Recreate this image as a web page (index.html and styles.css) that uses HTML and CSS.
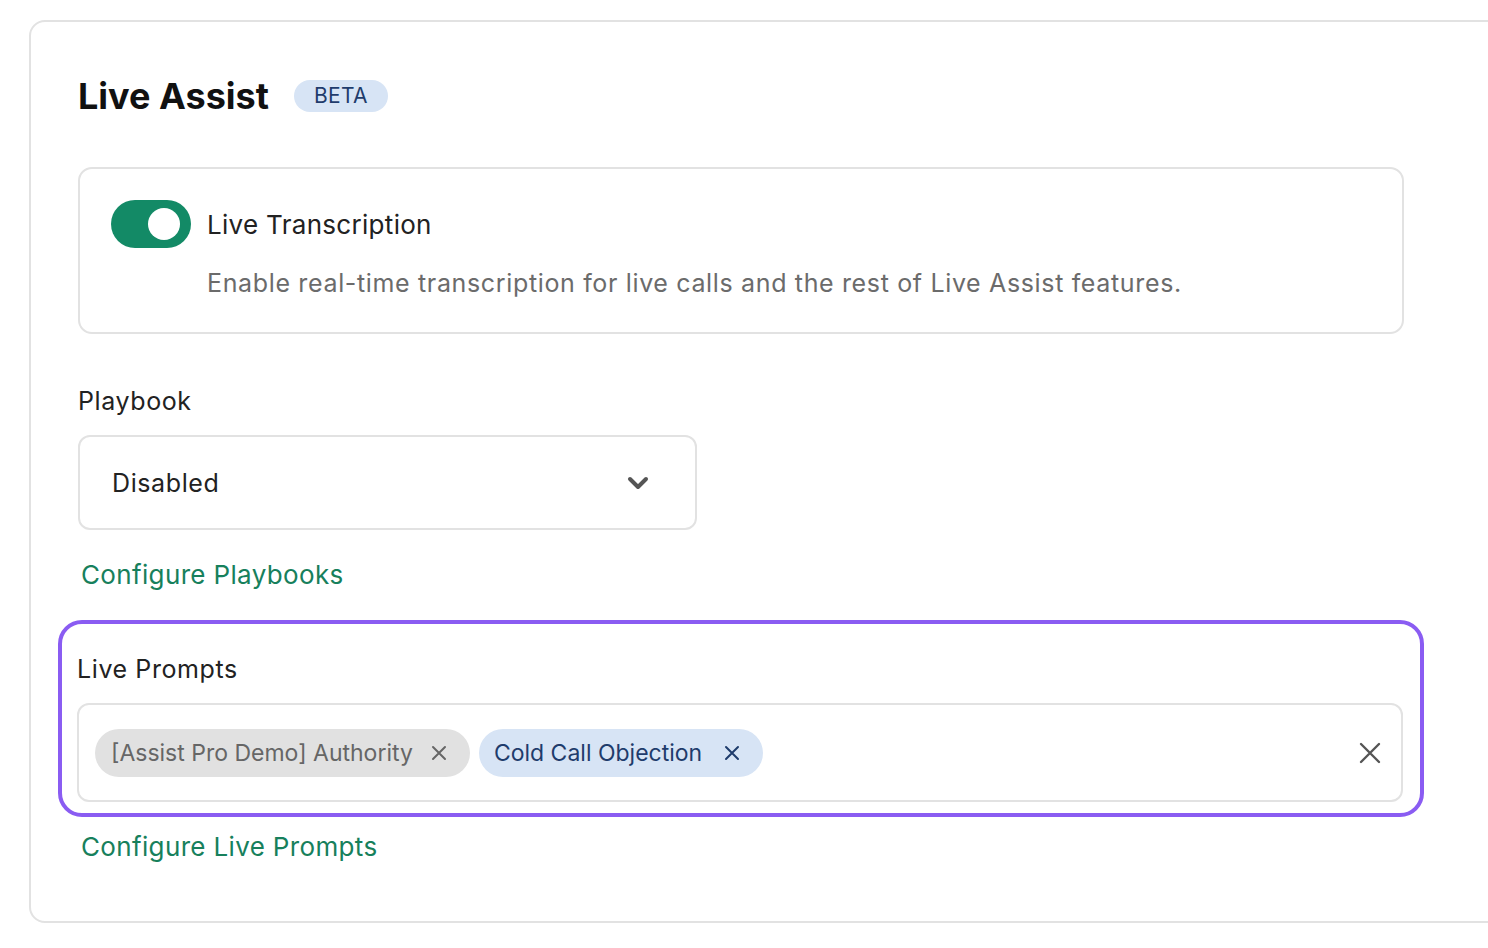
FILE: index.html
```html
<!DOCTYPE html>
<html>
<head>
<meta charset="utf-8">
<link rel="stylesheet" href="styles.css">
</head>
<body>
<div class="card">
  <div class="header">
    <h1 class="title">Live Assist</h1>
    <span class="badge">BETA</span>
  </div>

  <div class="toggle-box">
    <div class="toggle-row">
      <span class="switch"><span class="knob"></span></span>
      <span class="toggle-label">Live Transcription</span>
    </div>
    <p class="toggle-desc">Enable real-time transcription for live calls and the rest of Live Assist features.</p>
  </div>

  <div class="field">
    <div class="label">Playbook</div>
    <div class="select">
      <span class="select-value">Disabled</span>
      <svg class="chev" width="24" height="16" viewBox="0 0 24 16"><path d="M4 4 L12 12 L20 4" fill="none" stroke="#555" stroke-width="4" stroke-linecap="round" stroke-linejoin="round"/></svg>
    </div>
    <a class="link">Configure Playbooks</a>
  </div>

  <div class="highlight">
    <div class="label">Live Prompts</div>
    <div class="multi">
      <div class="chips">
        <span class="chip chip-gray">[Assist Pro Demo] Authority
          <svg class="chip-x" width="16" height="16" viewBox="0 0 16 16"><path d="M2 2 L14 14 M14 2 L2 14" stroke="currentColor" stroke-width="2" stroke-linecap="round"/></svg>
        </span>
        <span class="chip chip-blue">Cold Call Objection
          <svg class="chip-x" width="16" height="16" viewBox="0 0 16 16"><path d="M2 2 L14 14 M14 2 L2 14" stroke="currentColor" stroke-width="2" stroke-linecap="round"/></svg>
        </span>
      </div>
      <svg class="clear" width="22" height="22" viewBox="0 0 22 22"><path d="M2 2 L20 20 M20 2 L2 20" stroke="#555" stroke-width="2.4" stroke-linecap="round"/></svg>
    </div>
  </div>
  <a class="link link2">Configure Live Prompts</a>
</div>
</body>
</html>
```

FILE: styles.css
```css
html, body {
  margin: 0;
  padding: 0;
  background: #fff;
  overflow: hidden;
}
body {
  font-family: "Inter", "Noto Sans", sans-serif;
  color: #222;
  padding: 20px 0 0 29px;
}
.card {
  width: 1500px;
  height: 903px;
  box-sizing: border-box;
  border: 2px solid #e2e2e2;
  border-radius: 16px;
  padding: 50px 0 0 47px;
}
.header {
  display: flex;
  align-items: center;
  gap: 25px;
  height: 48px;
}
.title {
  margin: 0;
  font-size: 36px;
  font-weight: 700;
  color: #111;
  letter-spacing: 0;
}
.badge {
  background: #d7e4f5;
  color: #1f3c6c;
  font-size: 21px;
  padding: 3px 20px;
  border-radius: 16px;
  line-height: 26px;
  letter-spacing: 0.3px;
}
.toggle-box {
  margin-top: 47px;
  width: 1326px;
  height: 167px;
  box-sizing: border-box;
  border: 2px solid #e2e2e2;
  border-radius: 14px;
  padding: 31px 0 0 31px;
}
.toggle-row {
  display: flex;
  align-items: center;
  gap: 16px;
}
.switch {
  width: 80px;
  height: 48px;
  border-radius: 24px;
  background: #138a66;
  display: flex;
  align-items: center;
  justify-content: flex-end;
  padding-right: 11px;
  box-sizing: border-box;
}
.knob {
  width: 32px;
  height: 32px;
  border-radius: 50%;
  background: #fff;
}
.toggle-label {
  font-size: 26px;
  color: #222;
  letter-spacing: 0.3px;
}
.toggle-desc {
  margin: 20px 0 0 96px;
  font-size: 25px;
  color: #6b6b6b;
  letter-spacing: 0.65px;
}
.field {
  margin-top: 50px;
}
.label {
  font-size: 25px;
  color: #222;
  line-height: 34px;
  letter-spacing: 0.6px;
}
.select {
  margin-top: 17px;
  width: 619px;
  height: 95px;
  box-sizing: border-box;
  border: 2px solid #e2e2e2;
  border-radius: 12px;
  display: flex;
  align-items: center;
  justify-content: space-between;
  padding: 0 45px 0 32px;
}
.select-value {
  font-size: 25px;
  color: #222;
  letter-spacing: 0.6px;
}
.link {
  display: block;
  color: #17805c;
  font-size: 26px;
  margin: 27px 0 0 3px;
  line-height: 36px;
  letter-spacing: 0.35px;
}
.highlight {
  margin: 27px 0 0 -20px;
  width: 1366px;
  height: 197px;
  box-sizing: border-box;
  border: 4px solid #8a5cf2;
  border-radius: 24px;
  padding: 28px 0 0 15px;
}
.multi {
  margin-top: 17px;
  width: 1326px;
  height: 99px;
  box-sizing: border-box;
  border: 2px solid #e2e2e2;
  border-radius: 12px;
  display: flex;
  align-items: center;
  justify-content: space-between;
  padding: 0 20px 0 16px;
}
.chips {
  display: flex;
  gap: 9px;
}
.chip {
  display: flex;
  align-items: center;
  gap: 18px;
  height: 48px;
  border-radius: 24px;
  padding: 0 23px 0 16px;
  font-size: 23px;
}
.chip-blue {
  gap: 22px;
  padding-left: 15px;
}
.chip-gray {
  background: #e1e1e1;
  color: #666;
}
.chip-blue {
  background: #d7e4f5;
  color: #1f3c6c;
}
.chip-x {
  flex: none;
}
.link2 {
  margin-top: 12px;
}
```
